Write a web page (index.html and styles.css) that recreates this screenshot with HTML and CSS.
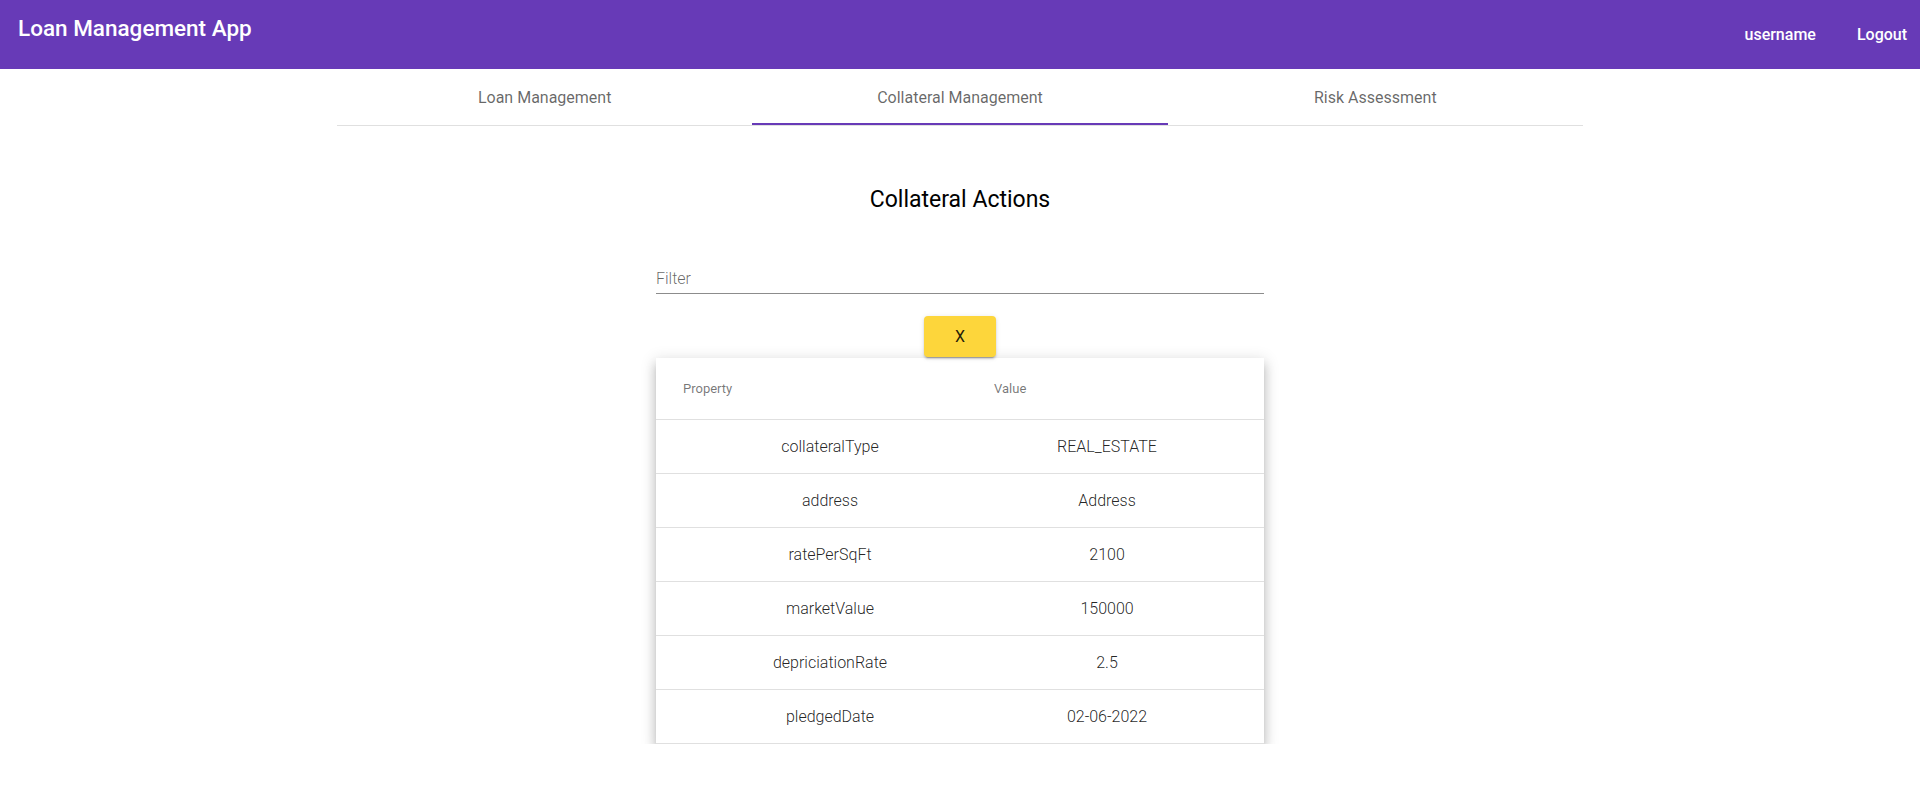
FILE: index.html
```html
<!DOCTYPE html>
<html lang="en">
<head>
<meta charset="utf-8">
<title>Loan Management App</title>
<link rel="stylesheet" href="styles.css">
</head>
<body>
<header class="toolbar">
  <h1 class="app-title">Loan Management App</h1>
  <nav class="user-nav">
    <a class="user-link" href="#">username</a>
    <a class="user-link" href="#">Logout</a>
  </nav>
</header>
<main class="content">
  <nav class="tabs">
    <a class="tab" href="#">Loan Management</a>
    <a class="tab tab-active" href="#">Collateral Management</a>
    <a class="tab" href="#">Risk Assessment</a>
  </nav>
  <section class="collateral">
    <h2 class="section-title">Collateral Actions</h2>
    <div class="filter-field">
      <input class="filter-input" type="text" placeholder="Filter">
    </div>
    <button class="close-btn" type="button">X</button>
    <div class="table-clip">
      <table class="props">
        <colgroup><col class="col-prop"><col class="col-val"></colgroup>
        <thead>
          <tr><th class="cell-prop">Property</th><th class="cell-val">Value</th></tr>
        </thead>
        <tbody>
          <tr><td class="cell-prop">collateralType</td><td class="cell-val">REAL_ESTATE</td></tr>
          <tr><td class="cell-prop">address</td><td class="cell-val">Address</td></tr>
          <tr><td class="cell-prop">ratePerSqFt</td><td class="cell-val">2100</td></tr>
          <tr><td class="cell-prop">marketValue</td><td class="cell-val">150000</td></tr>
          <tr><td class="cell-prop">depriciationRate</td><td class="cell-val">2.5</td></tr>
          <tr><td class="cell-prop">pledgedDate</td><td class="cell-val">02-06-2022</td></tr>
        </tbody>
      </table>
    </div>
  </section>
</main>
</body>
</html>
```
FILE: styles.css
```css
html, body {
  margin: 0;
  padding: 0;
  background: #ffffff;
  font-family: Roboto, "Liberation Sans", sans-serif;
  color: rgba(0, 0, 0, 0.87);
}

.toolbar {
  height: 69px;
  background: #673ab7;
  color: #ffffff;
  display: flex;
  align-items: center;
  justify-content: space-between;
  padding: 0 13px 0 18px;
  box-sizing: border-box;
}

.app-title {
  align-self: flex-start;
  margin: 12px 0 0;
  font-size: 22.5px;
  line-height: 32px;
  font-weight: 500;
}

.user-nav {
  display: flex;
  gap: 41px;
  padding-top: 1px;
}

.user-link {
  color: #ffffff;
  text-decoration: none;
  font-size: 16px;
  font-weight: 500;
  line-height: 24px;
}

.tabs {
  width: 1246px;
  margin: 0 auto;
  display: flex;
  border-bottom: 1px solid #e0e0e0;
}

.tab {
  flex: 1;
  height: 56px;
  display: flex;
  align-items: center;
  justify-content: center;
  font-size: 16px;
  color: rgba(0, 0, 0, 0.6);
  text-decoration: none;
  box-sizing: border-box;
}

.tab-active {
  border-bottom: 2px solid #673ab7;
  padding-top: 2px;
}

.collateral {
  display: flex;
  flex-direction: column;
  align-items: center;
}

.section-title {
  margin: 58px 0 0;
  font-size: 23px;
  line-height: 32px;
  font-weight: 400;
  color: #000000;
}

.filter-field {
  width: 608px;
  margin-top: 47px;
  border-bottom: 1px solid rgba(0, 0, 0, 0.45);
}

.filter-input {
  display: block;
  width: 100%;
  height: 30px;
  border: none;
  outline: none;
  padding: 0;
  font-family: inherit;
  font-size: 16px;
  font-weight: 300;
  background: transparent;
}

.filter-input::placeholder {
  color: rgba(0, 0, 0, 0.6);
}

.close-btn {
  margin-top: 22px;
  width: 72px;
  height: 41px;
  border: none;
  border-radius: 4px;
  background: #fdd63b;
  color: rgba(0, 0, 0, 0.87);
  font-family: inherit;
  font-size: 16px;
  font-weight: 400;
  box-shadow: 0 3px 1px -2px rgba(0, 0, 0, 0.2), 0 2px 2px 0 rgba(0, 0, 0, 0.14), 0 1px 5px 0 rgba(0, 0, 0, 0.12);
  position: relative;
  z-index: 1;
}

.table-clip {
  width: 608px;
  padding: 20px 30px 0;
  margin-top: -19px;
  overflow: hidden;
}

.props {
  width: 608px;
  table-layout: fixed;
  border-collapse: collapse;
  background: #ffffff;
  box-shadow: 0 5px 5px -3px rgba(0, 0, 0, 0.2), 0 8px 10px 1px rgba(0, 0, 0, 0.14), 0 3px 14px 2px rgba(0, 0, 0, 0.12);
}

.col-prop { width: 321px; }
.col-val { width: 287px; }

.props thead tr {
  height: 61px;
}

.props tbody tr {
  height: 54px;
}

.props tr {
  border-bottom: 1px solid #e0e0e0;
}

.props th {
  text-align: left;
  font-size: 13px;
  font-weight: 400;
  color: rgba(0, 0, 0, 0.54);
  padding: 0;
}

.props td {
  text-align: center;
  font-size: 16px;
  font-weight: 300;
  color: rgba(0, 0, 0, 0.87);
  padding: 0;
}

.props .cell-prop {
  padding-left: 27px;
}

.props th.cell-val {
  padding-left: 17px;
}

.props td.cell-val {
  padding-left: 17px;
  padding-right: 44px;
}
```
